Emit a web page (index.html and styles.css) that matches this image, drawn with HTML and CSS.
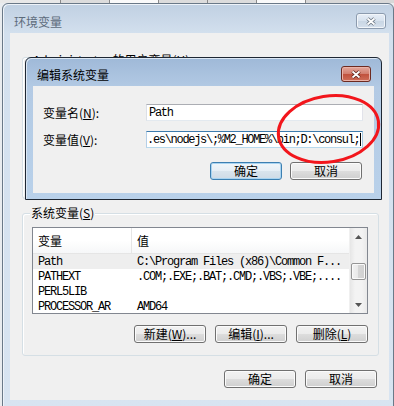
FILE: index.html
```html
<!DOCTYPE html>
<html lang="zh-CN">
<head>
  <meta charset="UTF-8" />
  <title>环境变量</title>
  <link rel="stylesheet" href="styles.css">
</head>
<body>
  <div class="desk">
    <!-- tab strip of the dialog behind -->
    <div class="tabs"><span></span><span></span><span class="on"></span><span></span><span></span><span class="on"></span></div>

    <!-- 环境变量 -->
    <div class="win outer">
      <div class="titlebar">
        <span class="title">环境变量</span>
        <span class="close">
          <svg width="12" height="9" viewBox="0 0 12 9"><path d="M2.5 1.5 L9.5 7.5 M9.5 1.5 L2.5 7.5" stroke="#6b7683" stroke-width="3.6"/><path d="M2.5 1.5 L9.5 7.5 M9.5 1.5 L2.5 7.5" stroke="#fff" stroke-width="1.8"/></svg>
        </span>
      </div>
      <div class="client">
        <div class="group user">
          <span class="legend">Administrator 的用户变量(<u>U</u>)</span>
        </div>
        <div class="group sys">
          <span class="legend">系统变量(<u>S</u>)</span>
          <div class="list">
            <div class="list-body">
              <div class="list-head"><span class="c1">变量</span><span class="c2">值</span></div>
              <div class="row sel"><span class="c1">Path</span><span class="c2">C:\Program Files (x86)\Common F...</span></div>
              <div class="row"><span class="c1">PATHEXT</span><span class="c2">.COM;.EXE;.BAT;.CMD;.VBS;.VBE;....</span></div>
              <div class="row"><span class="c1">PERL5LIB</span><span class="c2"></span></div>
              <div class="row"><span class="c1">PROCESSOR_AR</span><span class="c2">AMD64</span></div>
            </div>
            <div class="vscroll">
              <div class="arrow"><svg width="7" height="4" viewBox="0 0 7 4"><polygon points="3.5,0 7,4 0,4" fill="#555"/></svg></div>
              <div class="track">
                <div class="thumb"></div>
              </div>
              <div class="arrow"><svg width="7" height="4" viewBox="0 0 7 4"><polygon points="0,0 7,0 3.5,4" fill="#555"/></svg></div>
            </div>
          </div>
          <div class="btn-row">
            <span class="btn">新建(<u>W</u>)...</span>
            <span class="btn">编辑(<u>I</u>)...</span>
            <span class="btn">删除(<u>L</u>)</span>
          </div>
        </div>
        <div class="btn-row footer">
          <span class="btn">确定</span>
          <span class="btn">取消</span>
        </div>
      </div>
    </div>

    <!-- 编辑系统变量 -->
    <div class="win inner">
      <div class="titlebar">
        <span class="title">编辑系统变量</span>
        <span class="close red">
          <svg width="12" height="9" viewBox="0 0 12 9"><path d="M2.5 1.5 L9.5 7.5 M9.5 1.5 L2.5 7.5" stroke="#5b2219" stroke-width="3.6"/><path d="M2.5 1.5 L9.5 7.5 M9.5 1.5 L2.5 7.5" stroke="#fff" stroke-width="1.8"/></svg>
        </span>
      </div>
      <div class="client">
        <div class="field">
          <span class="label">变量名(<u>N</u>):</span>
          <span class="input first">Path</span>
        </div>
        <div class="field">
          <span class="label">变量值(<u>V</u>):</span>
          <span class="input focus">.es\nodejs\;%M2_HOME%\bin;D:\consul;<i class="caret"></i></span>
        </div>
        <div class="btn-row dlg">
          <span class="btn default">确定</span>
          <span class="btn">取消</span>
        </div>
      </div>
    </div>

    <svg class="mark" width="394" height="406" viewBox="0 0 394 406">
      <ellipse cx="328.5" cy="129" rx="50.5" ry="33" fill="none" stroke="#f2161c" stroke-width="3" transform="rotate(-9 328.5 129)"/>
    </svg>
  </div>
</body>
</html>
```

FILE: styles.css
```css
body {
  margin: 0;
  background: #e9ecef;
  font-family: "Noto Sans CJK SC", sans-serif;
  font-size: 12px;
  line-height: 14px;
  color: #000;
}
u {
  text-decoration: underline;
}
.desk {
  position: relative;
  width: 394px;
  height: 406px;
  overflow: hidden;
}
.tabs {
  display: flex;
  height: 3px;
  background: #d8d8d8;
}
.tabs span {
  width: 48px;
  border-right: 1px solid #8a8a8a;
  background: #dcdcdc;
}
.tabs span.on {
  background: #fafafa;
}
.tabs span:first-child {
  width: 60px;
  background: #e8e8e8;
}

/* windows */
.win {
  position: absolute;
  box-sizing: border-box;
  display: flex;
  flex-direction: column;
  border-radius: 6px 6px 0 0;
}
.outer {
  left: 2px;
  top: 3px;
  width: 392px;
  height: 410px;
  padding: 0 4px 0 7px;
  border: 1px solid #6a7988;
  background: linear-gradient(#c0d0e2, #d3e0ee 30px, #d8e4f1);
  box-shadow: inset 1px 1px 0 #eef3f9;
}
.inner {
  left: 25px;
  top: 57px;
  width: 357px;
  height: 143px;
  padding: 0 7px;
  border: 1px solid #1e2733;
  background: linear-gradient(#9fb9d8, #b3cae4 30px, #b9d1ea);
  box-shadow: inset 1px 1px 0 #dbe7f4;
}
.titlebar {
  display: flex;
  justify-content: space-between;
  align-items: flex-start;
}
.outer .titlebar {
  height: 29px;
}
.inner .titlebar {
  height: 28px;
}
.title {
  margin: 11px 0 0 4px;
  color: #5d6b7b;
}
.inner .title {
  margin-top: 10px;
  color: #000;
}
.close {
  box-sizing: border-box;
  width: 30px;
  height: 16px;
  margin: 9px 3px 0 0;
  display: flex;
  align-items: center;
  justify-content: center;
  border: 1px solid #8c9bae;
  border-radius: 3px;
  background: linear-gradient(#e7eef7, #d7e2ee 50%, #c9d6e4 50%, #d5e0ec);
  box-shadow: inset 0 0 0 1px #f2f6fa;
}
.close.red {
  margin: 8px 3px 0 0;
  border-color: #6d2a20;
  background: linear-gradient(#e3a79c, #d27d6d 50%, #c0503c 50%, #cf6e59);
  box-shadow: inset 0 0 0 1px #eab3a8;
}
.client {
  background: #f0f0f0;
  display: flex;
  flex-direction: column;
}
.outer .client {
  height: 367px;
}
.inner .client {
  height: 107px;
}

/* group boxes */
.group {
  position: relative;
  margin: 0 10px 0 12px;
  border: 1px solid #d5dfe5;
  border-radius: 3px;
  box-shadow: inset 1px 1px 0 #fff;
}
.user {
  margin-top: 24px;
  height: 142px;
  box-sizing: border-box;
}
.sys {
  margin-top: 14px;
  padding: 13px 10px 12px 9px;
}
.legend {
  position: absolute;
  top: -8px;
  left: 7px;
  padding: 0 1px;
  background: #f0f0f0;
}
.user .legend {
  top: -5px;
  left: 9px;
}

/* list view */
.list {
  display: flex;
  height: 87px;
  box-sizing: border-box;
  border: 1px solid #828790;
  background: #fff;
}
.list-body {
  flex: 1;
  overflow: hidden;
}
.list-head {
  display: flex;
  height: 26px;
  box-sizing: border-box;
  align-items: center;
  border-bottom: 1px solid #e5e5e5;
  background: linear-gradient(#fff, #fff 50%, #f6f7f8);
}
.list-head .c1 {
  border-right: 1px solid #e5e5e5;
  align-self: stretch;
  display: flex;
  align-items: center;
}
.c1 {
  width: 99px;
  padding-left: 5px;
  box-sizing: border-box;
  flex: none;
}
.c2 {
  padding-left: 5px;
  white-space: nowrap;
}
.row {
  display: flex;
  height: 15px;
  align-items: center;
  font-family: "Liberation Mono", "Noto Sans CJK SC", monospace;
  font-size: 12px;
  letter-spacing: -1.2px;
  white-space: nowrap;
}
.row .c1 {
  padding-left: 5px;
}
.row.sel {
  background: #eeeeee;
}

/* scroll bar */
.vscroll {
  width: 17px;
  display: flex;
  flex-direction: column;
  background: linear-gradient(90deg, #e6e6e6, #f3f3f3 30%, #f3f3f3 70%, #e9e9e9);
  border-left: 1px solid #f0f0f0;
}
.arrow {
  height: 17px;
  display: flex;
  align-items: center;
  justify-content: center;
}
.track {
  flex: 1;
  padding-top: 18px;
}
.thumb {
  height: 17px;
  margin: 0 1px;
  box-sizing: border-box;
  border: 1px solid #959595;
  border-radius: 2px;
  background: linear-gradient(90deg, #f3f3f3, #e8e8e8 50%, #d6d6d6 50%, #d0d0d0);
  box-shadow: inset 0 0 0 1px #fafafa;
}

/* buttons */
.btn-row {
  display: flex;
  justify-content: flex-end;
  gap: 9px;
}
.sys .btn-row {
  margin-top: 11px;
}
.footer {
  margin: 14px 12px 0 0;
}
.dlg {
  margin: 14px 12px 0 0;
  gap: 8px;
}
.btn {
  width: 72px;
  height: 18px;
  box-sizing: border-box;
  display: flex;
  align-items: center;
  justify-content: center;
  border: 1px solid #707070;
  border-radius: 3px;
  background: linear-gradient(#f2f2f2, #ebebeb 50%, #dddddd 50%, #cfcfcf);
  box-shadow: inset 0 0 0 1px #fbfbfb;
  white-space: nowrap;
}
.btn.default {
  border-color: #3c7fb1;
  background: linear-gradient(#f0f6fa, #e6eef5 50%, #d9e4ed 50%, #cfdbe6);
  box-shadow: inset 0 0 0 1px #a9d4f1;
}

/* edit dialog fields */
.field {
  display: flex;
  align-items: center;
  padding-left: 10px;
  margin-top: 10px;
}
.field:first-child {
  margin-top: 18px;
}
.label {
  width: 103px;
  flex: none;
}
.input {
  width: 217px;
  height: 17px;
  box-sizing: border-box;
  display: flex;
  align-items: center;
  overflow: hidden;
  white-space: nowrap;
  background: #fff;
  border: 1px solid #abadb3;
  border-color: #abadb3 #e2e3ea #e3e9ef #dbdfe6;
  font-family: "Liberation Mono", monospace;
  font-size: 12px;
  letter-spacing: -1.3px;
}
.input.first {
  padding-left: 2px;
}
.input.focus {
  border-color: #3d7bad #a4c9e3 #b7d9ed #b5cfe7;
}
.caret {
  display: inline-block;
  width: 1px;
  height: 13px;
  margin-left: 1px;
  background: #000;
}

.mark {
  position: absolute;
  left: 0;
  top: 0;
  pointer-events: none;
}
```
